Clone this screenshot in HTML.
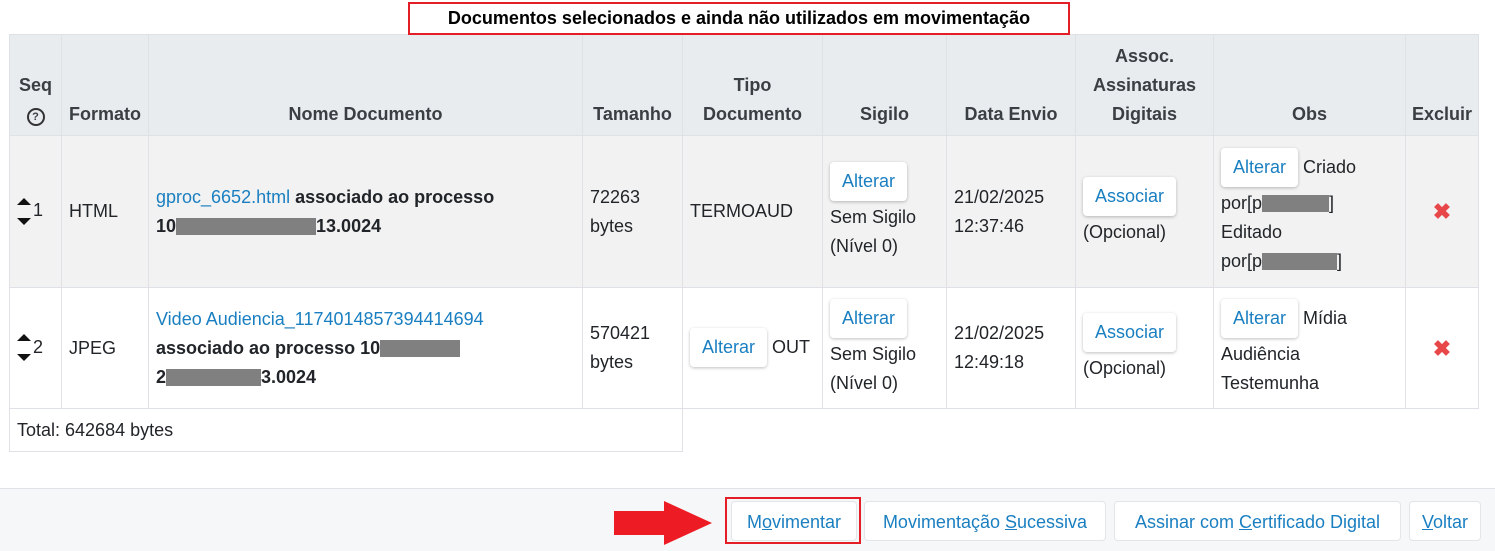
<!DOCTYPE html>
<html><head><meta charset="utf-8"><style>
body{margin:0;width:1495px;height:550px;background:#fff;font-family:"Liberation Sans",Arial,sans-serif;font-size:18px;color:#212529;position:relative;overflow:hidden}
.title{position:absolute;z-index:2;left:408px;top:2px;width:658px;height:29px;border:2px solid #e41e26;font-weight:bold;font-size:18px;text-align:center;line-height:29px;color:#000;background:#fff}
table{position:absolute;left:9px;top:34px;border-collapse:collapse;table-layout:fixed}
td,th{border:1px solid #dee2e6;padding:0 7px;vertical-align:middle;line-height:29px}
th{background:#e9ecef;font-weight:bold;font-size:18px;color:#3a3f44;text-align:center;height:94px;vertical-align:bottom;padding-bottom:6px}
tr.r1 td{background:#f2f2f2;height:151px}
tr.r2 td{height:120px}
a{color:#1a7fc1;text-decoration:none}
.btn{display:inline-block;background:#fff;color:#1a7fc1;border-radius:4px;box-shadow:0 1px 3px rgba(0,0,0,.25);padding:5px 12px;line-height:29px;margin:0 0 2px}
.g{display:inline-block;background:#808080;height:17px;vertical-align:middle}
.x{color:#e8474a;font-weight:bold;font-size:22px;text-align:center}
.arr{display:inline-block;vertical-align:middle;margin-right:2px}
.foot{position:absolute;left:0;top:488px;width:1495px;height:62px;background:#f6f7f8;border-top:1px solid #dee2e6}
.fb{position:absolute;top:12px;height:40px;background:#fff;border:1px solid #e3e6e9;border-radius:4px;color:#1a7fc1;font-size:18px;line-height:40px;text-align:center;box-sizing:border-box;white-space:nowrap}
</style></head><body>
<div class="title">Documentos selecionados e ainda não utilizados em movimentação</div>
<table>
<colgroup><col style="width:52px"><col style="width:87px"><col style="width:434px"><col style="width:100px"><col style="width:140px"><col style="width:124px"><col style="width:129px"><col style="width:138px"><col style="width:192px"><col style="width:73px"></colgroup>
<tr><th style="padding:0 2px 6px">Seq<br><span style="display:inline-block;width:14px;height:14px;border:2px solid #333;border-radius:50%;font-size:11px;line-height:14px">?</span></th><th>Formato</th><th>Nome Documento</th><th style="padding:0 2px 6px">Tamanho</th><th>Tipo<br>Documento</th><th>Sigilo</th><th>Data Envio</th><th style="padding:0 2px 6px">Assoc.<br>Assinaturas<br>Digitais</th><th>Obs</th><th style="padding:0 0 6px">Excluir</th></tr>
<tr class="r1"><td style="padding:0 0 0 7px"><svg class="arr" width="14" height="30"><polygon points="0,8 7,1 14,8" fill="#111"/><polygon points="0,21 14,21 7,28" fill="#111"/></svg>1</td><td>HTML</td><td><a>gproc_6652.html</a> <b>associado ao processo<br>10<span class="g" style="width:140px"></span>13.0024</b></td><td>72263<br>bytes</td><td>TERMOAUD</td><td><span class="btn">Alterar</span><br>Sem Sigilo<br>(Nível 0)</td><td>21/02/2025<br>12:37:46</td><td><span class="btn">Associar</span><br>(Opcional)</td><td><span class="btn">Alterar</span> Criado<br>por[p<span class="g" style="width:67px"></span>]<br>Editado<br>por[p<span class="g" style="width:75px"></span>]</td><td class="x">✖</td></tr>
<tr class="r2"><td style="padding:0 0 0 7px"><svg class="arr" width="14" height="30"><polygon points="0,8 7,1 14,8" fill="#111"/><polygon points="0,21 14,21 7,28" fill="#111"/></svg>2</td><td>JPEG</td><td><a>Video Audiencia_1174014857394414694</a><br><b>associado ao processo 10<span class="g" style="width:80px"></span><br>2<span class="g" style="width:95px"></span>3.0024</b></td><td>570421<br>bytes</td><td><span class="btn">Alterar</span> OUT</td><td><span class="btn">Alterar</span><br>Sem Sigilo<br>(Nível 0)</td><td>21/02/2025<br>12:49:18</td><td><span class="btn">Associar</span><br>(Opcional)</td><td><span class="btn">Alterar</span> Mídia<br>Audiência<br>Testemunha</td><td class="x">✖</td></tr>
<tr><td colspan="4" style="height:42px;line-height:42px">Total: 642684 bytes</td></tr>
</table>
<div class="foot">
<svg style="position:absolute;left:614px;top:12px" width="100" height="44"><polygon points="0,10 50,10 50,0 98,22 50,44 50,34 0,34" fill="#ed1c24"/></svg>
<div style="position:absolute;left:725px;top:8px;width:136px;height:47px;border:2px solid #e41e26;box-sizing:border-box"></div>
<div class="fb" style="left:731px;width:126px">M<u>o</u>vimentar</div>
<div class="fb" style="left:864px;width:242px">Movimentação <u>S</u>ucessiva</div>
<div class="fb" style="left:1114px;width:287px">Assinar com <u>C</u>ertificado Digital</div>
<div class="fb" style="left:1409px;width:72px"><u>V</u>oltar</div>
</div>
</body></html>
